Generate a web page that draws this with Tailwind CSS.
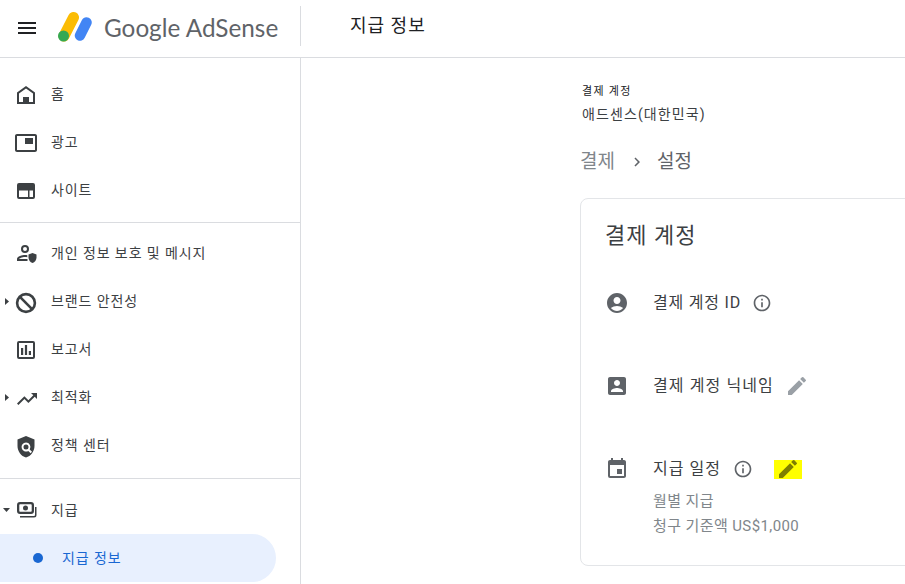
<!DOCTYPE html>
<html lang="ko"><head><meta charset="utf-8"><script src="https://cdn.jsdelivr.net/npm/@tailwindcss/browser@4"></script></head>
<body class="bg-white overflow-hidden">
<div class="w-[905px] h-[584px] overflow-hidden flex flex-col font-['Roboto','Noto_Sans_CJK_KR',sans-serif] text-[#3c4043]">
  <header class="h-[58px] shrink-0 border-b border-[#dadce0] flex items-center">
    <svg class="ml-[15px] w-6 h-6 shrink-0 mb-[2px]" viewBox="0 0 24 24" fill="#202124"><path d="M3 18h18v-2H3v2zm0-5h18v-2H3v2zm0-7v2h18V6H3z"/></svg>
    <svg class="ml-[19px] w-[34px] h-[30px] shrink-0 mb-[4px]" viewBox="0 0 34 30"><path d="M6 24 L 15.500 5.500" stroke="#fbbc04" stroke-width="11" stroke-linecap="round"/><circle cx="5.500" cy="24" r="5.500" fill="#34a853"/><path d="M22 23.500 L 28.500 10.500" stroke="#4285f4" stroke-width="10.500" stroke-linecap="round"/></svg>
    <span class="ml-[12px] w-[174px] text-[24.300px] leading-none text-[#5f6368] whitespace-nowrap font-['Lato',sans-serif]">Google AdSense</span>
    <div class="ml-[22px] w-px h-[40px] bg-[#dadce0] mb-[6px]"></div>
    <h1 class="ml-[49px] text-[18px] tracking-[1px] leading-6 text-[#202124] mb-[6px]">지급 정보</h1>
  </header>
  <div class="flex flex-1 min-h-0">
    <nav class="w-[301px] shrink-0 border-r border-[#dadce0] pt-[12px] text-[14px] tracking-[0.9px] text-[#3c4043]">
      <a class="h-12 flex items-center relative"><svg class="absolute left-[14px] w-6 h-6" viewBox="0 0 24 24" fill="#3c4043"><path fill-rule="evenodd" d="M12 4 3 10.500V22h18V10.500zM12 6.500 5 11.500V20h4v-5h6v5h4v-8.500z"/></svg><span class="pl-[51px]">홈</span></a>
      <a class="h-12 flex items-center relative"><svg class="absolute left-[14px] w-6 h-6" viewBox="0 0 24 24" fill="#3c4043"><path transform="translate(0 1)" d="M19 7h-8v6h8V7zm2-4H3c-1.100 0-2 .9-2 2v14c0 1.100.9 2 2 2h18c1.100 0 2-.9 2-2V5c0-1.100-.9-2-2-2zm0 16H3V5h18v14z"/></svg><span class="pl-[51px]">광고</span></a>
      <a class="h-12 flex items-center relative"><svg class="absolute left-[14px] w-6 h-6" viewBox="0 0 24 24" fill="#3c4043"><path fill-rule="evenodd" d="M19 5H5a2 2 0 0 0-2 2v12a2 2 0 0 0 2 2h14a2 2 0 0 0 2-2V7a2 2 0 0 0-2-2zM5 12.500h9v6.500H5zM15.500 12.500H19v6.500h-3.500z"/></svg><span class="pl-[51px]">사이트</span></a>
      <div class="h-px bg-[#dadce0] mt-[8px] mb-[6px]"></div>
      <a class="h-12 flex items-center relative"><svg class="absolute left-[14px] w-6 h-6" viewBox="0 0 24 24" fill="#3c4043"><path d="M11 4a4 4 0 1 0 0 8 4 4 0 0 0 0-8zm0 2a2 2 0 1 1 0 4 2 2 0 0 1 0-4zM3 20v-2c0-2.700 5.300-4 8-4 .7 0 1.500.1 2.300.2v2c-.8-.2-1.600-.3-2.300-.3-2.900 0-5.900 1.400-6 2.100h8.500V20H3z"/><path d="M18.500 12l-4 1.500v3c0 2.500 1.700 4.800 4 5.500 2.300-.7 4-3 4-5.500v-3l-4-1.500z"/></svg><span class="pl-[51px]">개인 정보 보호 및 메시지</span></a>
      <a class="h-12 flex items-center relative"><svg class="absolute left-[4px] w-[5px] h-[7px]" viewBox="0 0 5 7" fill="#3c4043"><path d="M1 0l4 3.500L1 7z"/></svg><svg class="absolute left-[14px] w-6 h-6 overflow-visible" viewBox="0 0 24 24"><g transform="translate(0 2)" fill="none" stroke="#3c4043" stroke-width="2.600"><circle cx="12" cy="12" r="8.900"/><path d="M5.700 5.700l12.600 12.600"/></g></svg><span class="pl-[51px]">브랜드 안전성</span></a>
      <a class="h-12 flex items-center relative"><svg class="absolute left-[14px] w-6 h-6" viewBox="0 0 24 24" fill="#3c4043"><path transform="translate(0 1)" fill-rule="evenodd" d="M5 3a2 2 0 0 0-2 2v14a2 2 0 0 0 2 2h14a2 2 0 0 0 2-2V5a2 2 0 0 0-2-2zM5 5h14v14H5z"/><path transform="translate(0 1)" d="M7 10h2.200v7H7zm3.900-3h2.200v10h-2.200zm3.900 6H17v4h-2.200z"/></svg><span class="pl-[51px]">보고서</span></a>
      <a class="h-12 flex items-center relative"><svg class="absolute left-[4px] w-[5px] h-[7px]" viewBox="0 0 5 7" fill="#3c4043"><path d="M1 0l4 3.500L1 7z"/></svg><svg class="absolute left-[14px] w-6 h-6" viewBox="0 0 24 24" fill="#3c4043"><path transform="translate(1 2)" d="M16 6l2.290 2.290-4.880 4.880-4-4L2 16.590 3.410 18l6-6 4 4 6.300-6.290L22 12V6z"/></svg><span class="pl-[51px]">최적화</span></a>
      <a class="h-12 flex items-center relative"><svg class="absolute left-[14px] w-6 h-6 overflow-visible" viewBox="0 0 24 24" fill="#3c4043"><path transform="translate(0 2)" fill-rule="evenodd" d="M12 1 3.500 4.500v6.500c0 5.300 3.600 10.200 8.500 11.500 4.900-1.300 8.500-6.200 8.500-11.500V4.500L12 1zm0 6.500a4.500 4.500 0 0 1 3.700 7l2.300 2.300-1.400 1.400-2.300-2.300A4.500 4.500 0 1 1 12 7.500zm0 2a2.500 2.500 0 1 0 0 5 2.500 2.500 0 0 0 0-5z"/></svg><span class="pl-[51px]">정책 센터</span></a>
      <div class="h-px bg-[#dadce0] mt-[9px] mb-[7px]"></div>
      <a class="h-12 flex items-center relative"><svg class="absolute left-[3px] w-[7px] h-[4px]" viewBox="0 0 7 4" fill="#3c4043"><path d="M0 0h7L3.500 4z"/></svg><svg class="absolute left-[14px] w-6 h-6" viewBox="0 0 24 24" fill="#3c4043"><path fill-rule="evenodd" d="M6 4h11a3 3 0 0 1 3 3v6a3 3 0 0 1-3 3H6a3 3 0 0 1-3-3V7a3 3 0 0 1 3-3zm0 2.300a.8.8 0 0 0-.7.7v6a.8.8 0 0 0 .7.7h11a.8.8 0 0 0 .7-.7V7a.8.8 0 0 0-.7-.7H6zM11.500 7.500a2.500 2.500 0 1 1 0 5 2.500 2.500 0 0 1 0-5z"/><path d="M21 9h1.500v8a2.500 2.500 0 0 1-2.500 2.500H6V18h14a1 1 0 0 0 1-1V9z"/></svg><span class="pl-[51px]">지급</span></a>
      <a class="h-12 w-[276px] flex items-center relative rounded-r-full bg-[#e8f0fe] text-[#1967d2]"><span class="absolute left-[33px] w-[10px] h-[10px] rounded-full bg-[#1967d2]"></span><span class="pl-[62px]">지급 정보</span></a>
    </nav>
    <main class="flex-1 min-w-0 pl-[279px] pt-[28px]">
      <div class="pl-[2px]">
        <p class="text-[11px] tracking-[1.300px] leading-[12px] text-[#202124]">결제 계정</p>
        <p class="mt-[6px] text-[14px] tracking-[1.100px] leading-5 text-[#3c4043]">애드센스(대한민국)</p>
      </div>
      <div class="mt-[24px] h-[28px] flex items-center text-[19px] text-[#5f6368]">
        <span class="text-[#80868b]">결제</span>
        <svg class="ml-[13px] mr-[11px] w-[18px] h-[18px]" viewBox="0 0 24 24" fill="#5f6368"><path d="M10 6 8.590 7.410 13.170 12l-4.580 4.590L10 18l6-6z"/></svg>
        <span>설정</span>
      </div>
      <section class="mt-[22px] w-[600px] h-[368px] border border-[#e3e5e8] rounded-lg pl-[24px] pt-[19px]">
        <h2 class="text-[22px] tracking-[1px] leading-[36px] text-[#3c4043]">결제 계정</h2>
        <div class="mt-[37px] h-[24px] flex items-center">
          <svg class="w-6 h-6" viewBox="0 0 24 24" fill="#5f6368"><path d="M12 2C6.480 2 2 6.480 2 12s4.480 10 10 10 10-4.480 10-10S17.520 2 12 2zm0 4c1.930 0 3.500 1.570 3.500 3.500S13.930 13 12 13s-3.500-1.570-3.500-3.500S10.070 6 12 6zm0 14c-2.030 0-4.430-.82-6.140-2.880C7.550 15.800 9.680 15 12 15s4.450.8 6.140 2.120C16.430 19.180 14.030 20 12 20z"/></svg>
          <span class="ml-[24px] text-[16px] tracking-[0.8px] text-[#3c4043]">결제 계정 ID</span>
          <svg class="ml-[11px] w-5 h-5" viewBox="0 0 24 24" fill="#5f6368"><path d="M11 7h2v2h-2zm0 4h2v6h-2zm1-9C6.480 2 2 6.480 2 12s4.480 10 10 10 10-4.480 10-10S17.520 2 12 2zm0 18c-4.410 0-8-3.590-8-8s3.590-8 8-8 8 3.590 8 8-3.590 8-8 8z"/></svg>
        </div>
        <div class="mt-[59px] h-[24px] flex items-center">
          <svg class="w-6 h-6" viewBox="0 0 24 24" fill="#5f6368"><path d="M3 5v14c0 1.100.9 2 2 2h14c1.100 0 2-.9 2-2V5c0-1.100-.9-2-2-2H5c-1.100 0-2 .9-2 2zm12 4c0 1.660-1.340 3-3 3s-3-1.340-3-3 1.340-3 3-3 3 1.340 3 3zm-9 8c0-2 4-3.100 6-3.100s6 1.100 6 3.100v1H6v-1z"/></svg>
          <span class="ml-[24px] text-[16px] tracking-[1.100px] text-[#3c4043]">결제 계정 닉네임</span>
          <svg class="ml-[11px] w-6 h-6" viewBox="0 0 24 24" fill="#9aa0a6"><path d="M3 17.250V21h3.750L17.810 9.940l-3.750-3.750L3 17.250zM20.710 7.040a1 1 0 0 0 0-1.410l-2.340-2.340a1 1 0 0 0-1.410 0l-1.830 1.830 3.750 3.750 1.830-1.830z"/></svg>
        </div>
        <div class="mt-[59px] h-[24px] flex items-center">
          <svg class="w-6 h-6" viewBox="0 0 24 24" fill="#5f6368"><path d="M17 12h-5v5h5v-5zM16 1v2H8V1H6v2H5c-1.110 0-1.990.9-1.990 2L3 19a2 2 0 0 0 2 2h14c1.100 0 2-.9 2-2V5c0-1.100-.9-2-2-2h-1V1h-2zm3 18H5V8h14v11z"/></svg>
          <span class="ml-[24px] text-[16px] tracking-[1px] text-[#3c4043]">지급 일정</span>
          <svg class="ml-[12px] w-5 h-5" viewBox="0 0 24 24" fill="#5f6368"><path d="M11 7h2v2h-2zm0 4h2v6h-2zm1-9C6.480 2 2 6.480 2 12s4.480 10 10 10 10-4.480 10-10S17.520 2 12 2zm0 18c-4.410 0-8-3.590-8-8s3.590-8 8-8 8 3.590 8 8-3.590 8-8 8z"/></svg>
          <span class="ml-[21px] w-[28px] h-[19px] bg-[#ffff00] flex items-center justify-center">
            <svg class="w-6 h-6 shrink-0" viewBox="0 0 24 24" fill="#7f7f00"><path d="M3 17.250V21h3.750L17.810 9.940l-3.750-3.750L3 17.250zM20.710 7.040a1 1 0 0 0 0-1.410l-2.340-2.340a1 1 0 0 0-1.410 0l-1.830 1.830 3.750 3.750 1.830-1.830z"/></svg>
          </span>
        </div>
        <div class="ml-[48px] mt-[8px] text-[15px] tracking-[0.4px] leading-[25px] text-[#80868b]">
          <p>월별 지급</p>
          <p>청구 기준액 US$1,000</p>
        </div>
      </section>
    </main>
  </div>
</div>
</body></html>
